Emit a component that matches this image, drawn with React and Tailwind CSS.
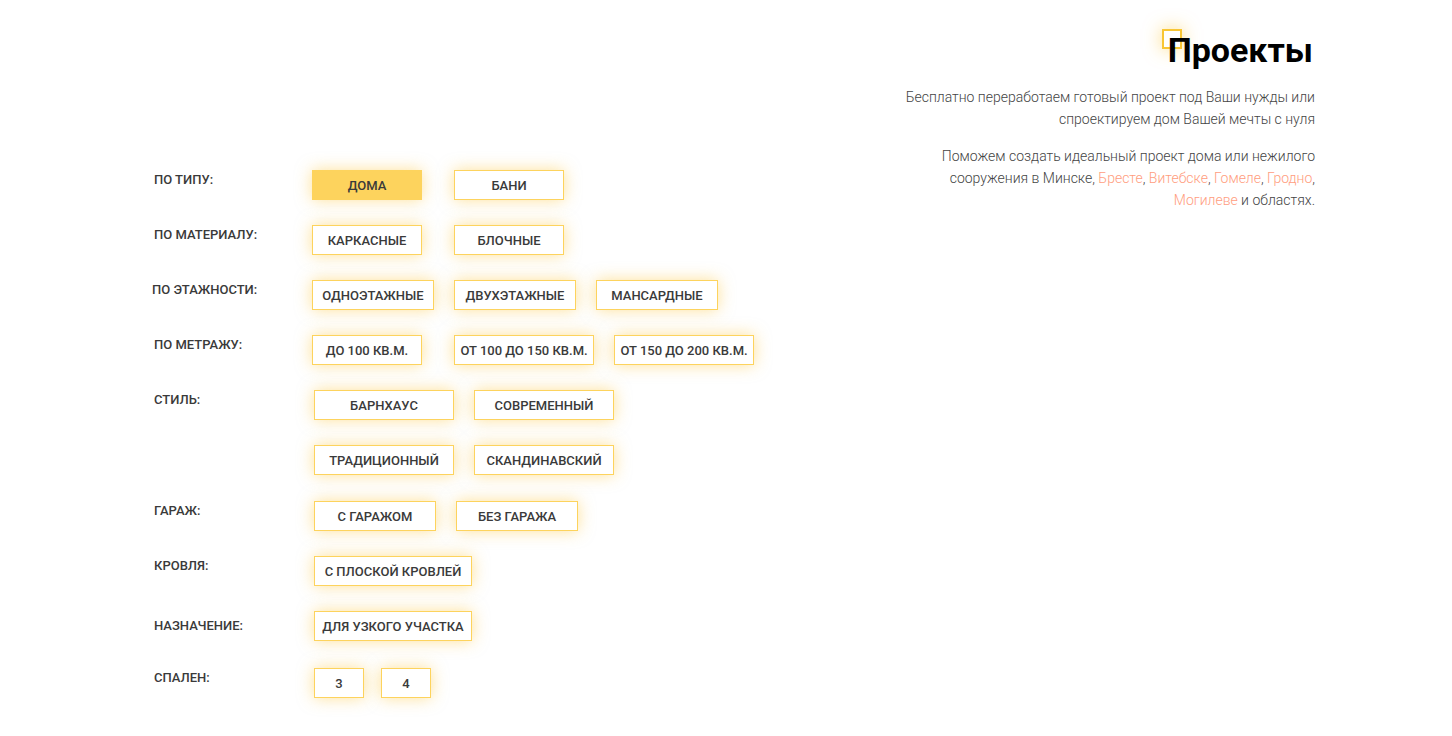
import React from 'react';

const rows = [
  {
    label: 'По типу:',
    start: 'ml-0',
    lines: [[
      { text: 'Дома', w: 'w-[110px]', active: true },
      { text: 'Бани', w: 'w-[110px]', gap: 'ml-[32px]' },
    ]],
  },
  {
    label: 'По материалу:',
    start: 'ml-0',
    lines: [[
      { text: 'Каркасные', w: 'w-[110px]' },
      { text: 'Блочные', w: 'w-[110px]', gap: 'ml-[32px]' },
    ]],
  },
  {
    label: 'По этажности:',
    inner: '-ml-[2px]',
    start: 'ml-0',
    lines: [[
      { text: 'Одноэтажные', w: 'w-[122px]' },
      { text: 'Двухэтажные', w: 'w-[122px]', gap: 'ml-[20px]' },
      { text: 'Мансардные', w: 'w-[122px]', gap: 'ml-[20px]' },
    ]],
  },
  {
    label: 'По метражу:',
    start: 'ml-0',
    lines: [[
      { text: 'До 100 кв.м.', w: 'w-[110px]' },
      { text: 'От 100 до 150 кв.м.', w: 'w-[140px]', gap: 'ml-[32px]' },
      { text: 'От 150 до 200 кв.м.', w: 'w-[140px]', gap: 'ml-[20px]' },
    ]],
  },
  {
    label: 'Стиль:',
    start: 'ml-[2px]',
    lines: [
      [
        { text: 'Барнхаус', w: 'w-[140px]' },
        { text: 'Современный', w: 'w-[140px]', gap: 'ml-[20px]' },
      ],
      [
        { text: 'Традиционный', w: 'w-[140px]' },
        { text: 'Скандинавский', w: 'w-[140px]', gap: 'ml-[20px]' },
      ],
    ],
    mb: 'mb-[26px]',
  },
  {
    label: 'Гараж:',
    start: 'ml-[2px]',
    lines: [[
      { text: 'С гаражом', w: 'w-[122px]' },
      { text: 'Без гаража', w: 'w-[122px]', gap: 'ml-[20px]' },
    ]],
  },
  {
    label: 'Кровля:',
    start: 'ml-[2px]',
    lines: [[{ text: 'С плоской кровлей', w: 'w-[158px]' }]],
  },
  {
    label: 'Назначение:',
    labelClass: 'pt-[7px]',
    start: 'ml-[2px]',
    lines: [[{ text: 'Для узкого участка', w: 'w-[158px]' }]],
    mb: 'mb-[27px]',
  },
  {
    label: 'Спален:',
    start: 'ml-[2px]',
    lines: [[
      { text: '3', w: 'w-[50px]' },
      { text: '4', w: 'w-[50px]', gap: 'ml-[17px]' },
    ]],
  },
];

const FilterButton = ({ text, w, active, gap = '' }) => (
  <button
    className={`${w} ${gap} h-[30px] shrink-0 border border-[#fdd35d] text-[13px] font-medium uppercase leading-none text-[#3a3a3a] shadow-[0_0_16px_rgba(253,196,50,0.5)] ${
      active ? 'bg-[#fdd35d]' : 'bg-white'
    }`}
  >
    {text}
  </button>
);

const App = () => {
  return (
    <div className="flex min-h-[736px] w-full items-start justify-between bg-white font-['Roboto',sans-serif]">
      <div className="pl-[154px] pt-[170px]">
        {rows.map((row) => (
          <div key={row.label} className={`flex ${row.mb || 'mb-[25px]'}`}>
            <div
              className={`w-[158px] shrink-0 pt-[2px] text-[13px] font-medium uppercase leading-[16px] text-[#3a3a3a] ${row.labelClass || ''}`}
            >
              <span className={`block ${row.inner || ''}`}>{row.label}</span>
            </div>
            <div className={`flex flex-col gap-[25px] ${row.start}`}>
              {row.lines.map((line, i) => (
                <div key={i} className="flex">
                  {line.map((b) => (
                    <FilterButton key={b.text} {...b} />
                  ))}
                </div>
              ))}
            </div>
          </div>
        ))}
      </div>

      <div className="flex flex-col items-end pr-[137px] pt-[29px]">
        <h1 className="relative mr-[2px] text-[34px] font-bold leading-[42px] text-black">
          <span className="absolute left-[-6px] top-0 h-[20px] w-[20px] border-2 border-[#f8c635] bg-white shadow-[0_0_18px_rgba(253,196,50,0.6)]" />
          <span className="relative">Проекты</span>
        </h1>
        <p className="mt-[15px] text-right text-[14px] font-light leading-[22px] text-[#444]">
          Бесплатно переработаем готовый проект под Ваши нужды или
          <br />
          спроектируем дом Вашей мечты с нуля
        </p>
        <p className="mt-[15px] text-right text-[14px] font-light leading-[22px] text-[#444]">
          Поможем создать идеальный проект дома или нежилого
          <br />
          сооружения в Минске, <span className="text-[#ff9d7e]">Бресте</span>,{' '}
          <span className="text-[#ff9d7e]">Витебске</span>,{' '}
          <span className="text-[#ff9d7e]">Гомеле</span>,{' '}
          <span className="text-[#ff9d7e]">Гродно</span>,
          <br />
          <span className="text-[#ff9d7e]">Могилеве</span> и областях.
        </p>
      </div>
    </div>
  );
};

export default App;
